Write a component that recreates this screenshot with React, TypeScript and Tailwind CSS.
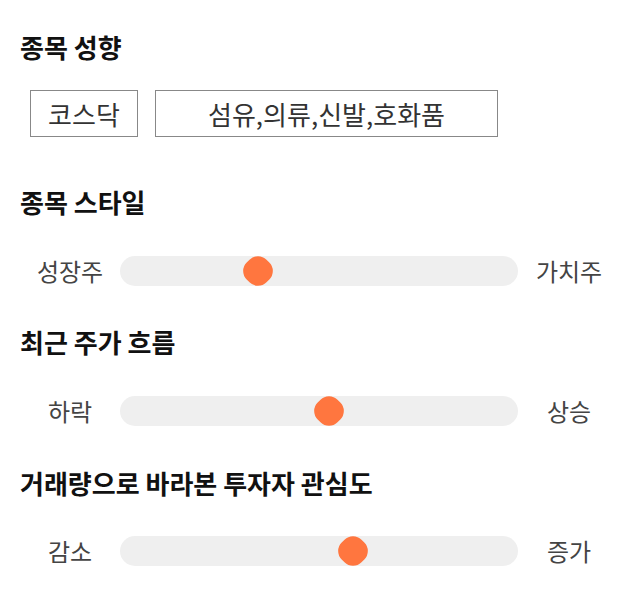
import React from "react";

const font = { fontFamily: '"Noto Sans CJK KR", "Noto Sans", sans-serif' };

type SliderProps = { left: string; right: string; center: number };

function Slider({ left, right, center }: SliderProps) {
  return (
    <div className="flex h-[30px] items-center">
      <div className="w-[100px] text-center text-[24px] leading-[30px] text-[#444444]">{left}</div>
      <div className="relative h-[30px] w-[398px] rounded-full bg-[#efefef]">
        <div
          className="absolute top-1/2 h-[28px] w-[28px] -translate-x-1/2 -translate-y-1/2 rotate-45 rounded-[12px] bg-[#ff763f]"
          style={{ left: `${center}px` }}
        />
      </div>
      <div className="w-[102px] text-center text-[24px] leading-[30px] text-[#444444]">{right}</div>
    </div>
  );
}

function Heading({ children, className = "" }: { children: React.ReactNode; className?: string }) {
  return (
    <div className={`h-[30px] text-[26px] font-bold leading-[30px] text-[#111111] ${className}`}>{children}</div>
  );
}

export default function App() {
  return (
    <div className="h-[606px] w-[640px] bg-white px-[20px] pt-[32px]" style={font}>
      <Heading>종목 성향</Heading>
      <div className="mt-[28px] flex gap-[17px] pl-[10px]">
        <div className="flex h-[47px] w-[108px] items-center justify-center border border-[#888888] text-[26px] text-[#333333]">
          코스닥
        </div>
        <div className="flex h-[47px] w-[343px] items-center justify-center border border-[#888888] text-[26px] text-[#333333]">
          섬유,의류,신발,호화품
        </div>
      </div>
      <Heading className="mt-[50px]">종목 스타일</Heading>
      <div className="mt-[39px]">
        <Slider left="성장주" right="가치주" center={138} />
      </div>
      <Heading className="mt-[41px]">최근 주가 흐름</Heading>
      <div className="mt-[39px]">
        <Slider left="하락" right="상승" center={208.5} />
      </div>
      <Heading className="mt-[42px]">거래량으로 바라본 투자자 관심도</Heading>
      <div className="mt-[38px]">
        <Slider left="감소" right="증가" center={232.5} />
      </div>
    </div>
  );
}
